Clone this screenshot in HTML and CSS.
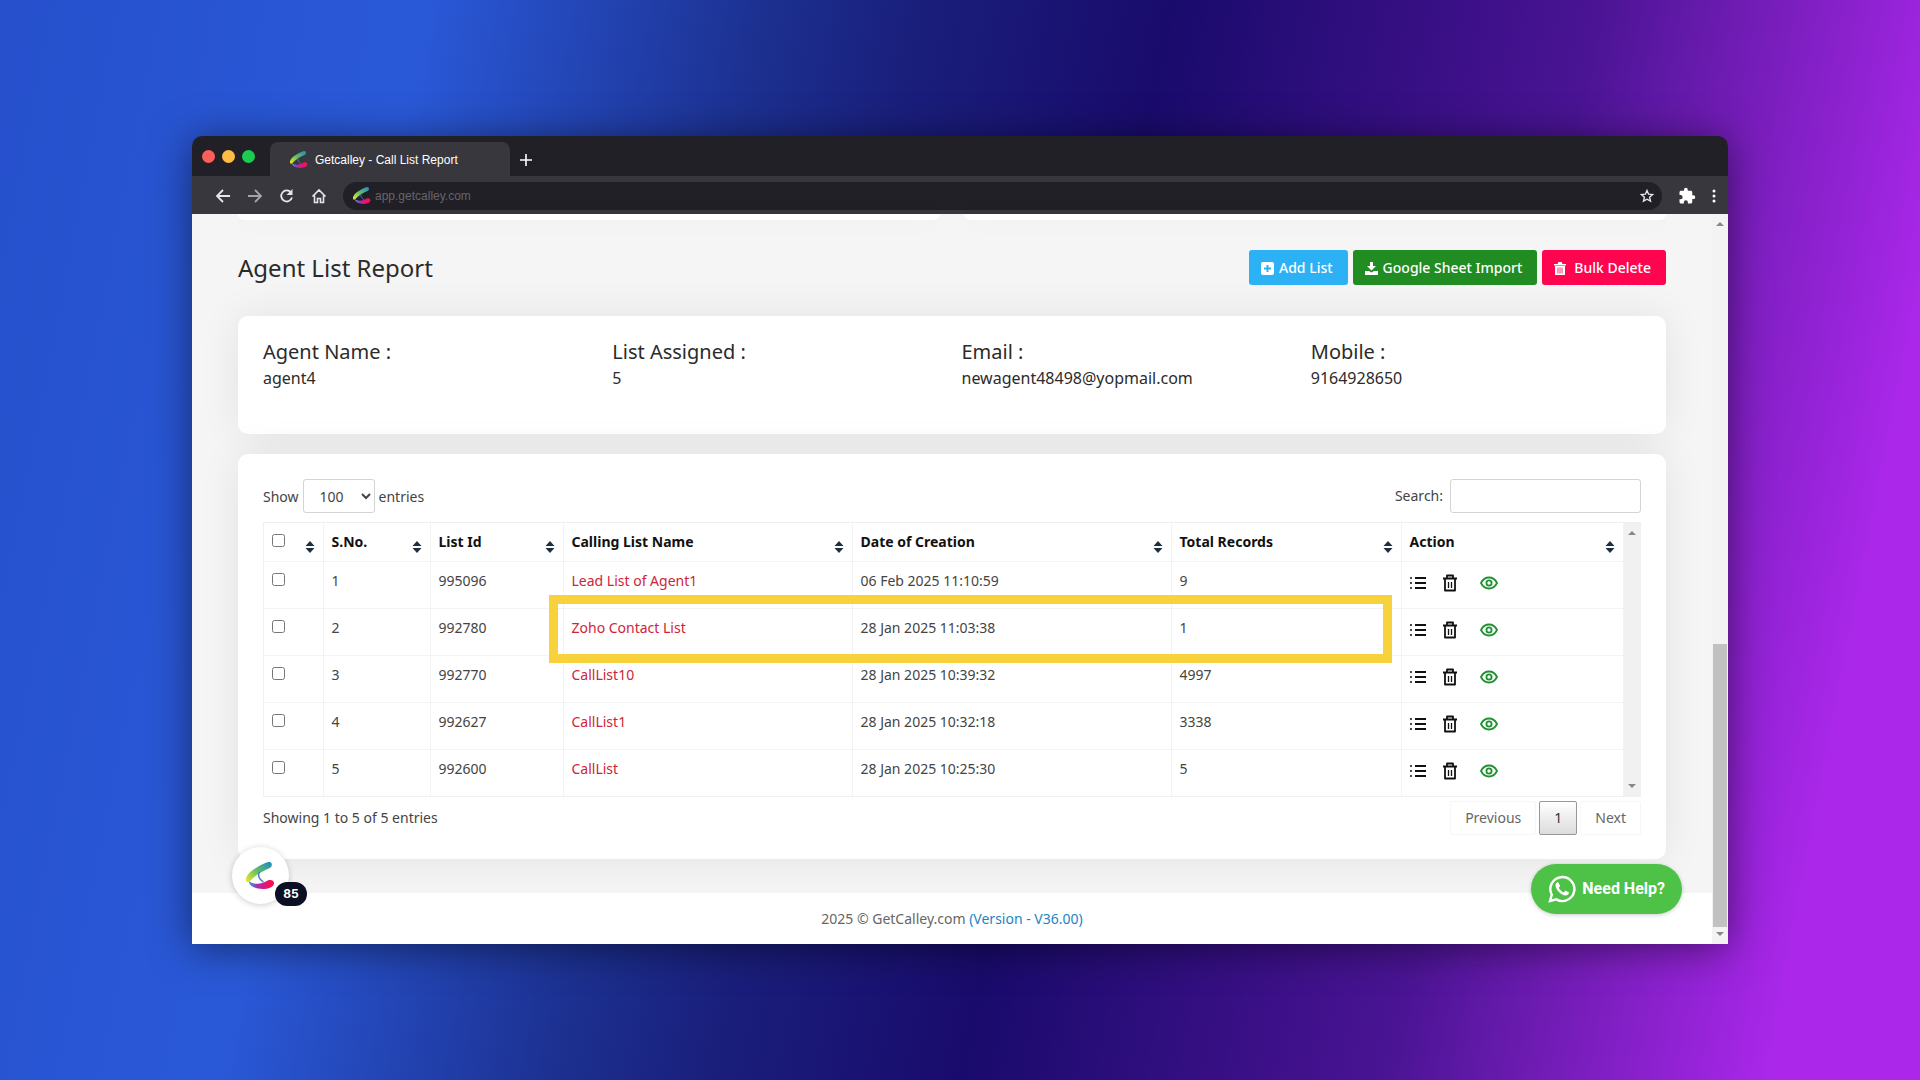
FILE: index.html
```html
<!DOCTYPE html>
<html lang="en">
<head>
    <meta charset="UTF-8">
    <meta name="viewport" content="width=device-width, initial-scale=1.0">
    <title>Getcalley - Call List Report</title>
    <link rel="stylesheet" href="styles.css">
</head>
<body>
    <!-- shared icons -->
    <svg class="sprite" aria-hidden="true">
        <defs>
            <linearGradient id="swooshTop" x1="0" y1="1" x2="1" y2="0">
                <stop offset="0" stop-color="#f6ea1e"/>
                <stop offset="0.5" stop-color="#62bd68"/>
                <stop offset="1" stop-color="#1c86c8"/>
            </linearGradient>
            <linearGradient id="swooshBottom" x1="0" y1="0" x2="1" y2="0">
                <stop offset="0" stop-color="#2aa5e0"/>
                <stop offset="0.35" stop-color="#b02ab0"/>
                <stop offset="0.8" stop-color="#f5105a"/>
            </linearGradient>
            <symbol id="logo" viewBox="0 0 30 28">
                <path d="M23 0C14 3 2 10 0 17c-1 4 2 5 4 3C9 14 16 10 25 6c3-2 2-7-2-6z" fill="url(#swooshTop)"/>
                <path d="M14 10c-2 3-1 7 4 11" fill="none" stroke="#3f7fc8" stroke-width="1.500"/>
                <path d="M3 20c0 5 7 8 14 8 6 0 12-2 12-6 0-3-3-4-6-3-5 3-13 6-20 1z" fill="url(#swooshBottom)"/>
            </symbol>
            <symbol id="list" viewBox="0 0 16 14">
                <path d="M5 2h11M5 7h11M5 12h11" stroke="#111" stroke-width="1.800"/>
                <path d="M0 2h2M0 7h2M0 12h2" stroke="#111" stroke-width="1.500"/>
            </symbol>
            <symbol id="trash" viewBox="0 0 16 18">
                <path d="M1 4.500h14M5 4V1.500h6V4M3 5v11.500h10V5" fill="none" stroke="#111" stroke-width="1.800" stroke-linejoin="round"/>
                <path d="M6.500 8v6M9.500 8v6" stroke="#111" stroke-width="1.300"/>
            </symbol>
            <symbol id="eye" viewBox="0 0 18 14">
                <path d="M1 7c2-4 5-5.500 8-5.500S15 3 17 7c-2 4-5 5.500-8 5.500S3 11 1 7z" fill="none" stroke="#1f9130" stroke-width="1.800"/>
                <circle cx="9" cy="7" r="2.600" fill="none" stroke="#1f9130" stroke-width="1.800"/>
            </symbol>
            <symbol id="sort" viewBox="0 0 10 14">
                <path d="M5 1l4.500 5h-9zM5 13L.5 8h9z" fill="#1f2f42"/>
            </symbol>
        </defs>
    </svg>

    <div class="browser">
        <div class="tab-bar">
            <div class="lights">
                <span class="light red"></span>
                <span class="light yellow"></span>
                <span class="light green"></span>
            </div>
            <div class="tab">
                <svg class="favicon"><use href="#logo"/></svg>
                <span>Getcalley - Call List Report</span>
            </div>
            <button class="new-tab" aria-label="New tab">
                <svg width="12" height="12" viewBox="0 0 12 12"><path d="M6 0v12M0 6h12" stroke="#fff" stroke-width="1.600"/></svg>
            </button>
        </div>

        <div class="toolbar">
            <button aria-label="Back">
                <svg width="16" height="16" viewBox="0 0 16 16"><path d="M15 8H2M8 2L2 8l6 6" fill="none" stroke="#e6e6e8" stroke-width="1.800"/></svg>
            </button>
            <button aria-label="Forward">
                <svg width="16" height="16" viewBox="0 0 16 16"><path d="M1 8h13M8 2l6 6-6 6" fill="none" stroke="#a5a5a9" stroke-width="1.800"/></svg>
            </button>
            <button aria-label="Reload">
                <svg width="16" height="16" viewBox="0 0 16 16"><path d="M12 4.500A5.500 5.500 0 1 0 13 9.500" fill="none" stroke="#e6e6e8" stroke-width="1.800"/><path d="M13.500 1v6h-6z" fill="#e6e6e8"/></svg>
            </button>
            <button aria-label="Home">
                <svg width="16" height="16" viewBox="0 0 16 16"><path d="M1.500 8.500L8 2l6.500 6.500M3.500 7.500v7h3v-4h3v4h3v-7" fill="none" stroke="#e6e6e8" stroke-width="1.600"/></svg>
            </button>
            <div class="address">
                <svg class="favicon"><use href="#logo"/></svg>
                <input type="text" value="app.getcalley.com" aria-label="Address">
                <svg width="14" height="14" viewBox="0 0 14 14"><path d="M7 1.500l1.600 3.700 4 .4-3 2.700.9 3.900L7 10.200l-3.500 2 .9-3.900-3-2.700 4-.4z" fill="none" stroke="#e6e6e8" stroke-width="1.400"/></svg>
            </div>
            <button aria-label="Extensions">
                <svg width="18" height="18" viewBox="0 0 24 24"><path d="M20.500 11H19V7c0-1.100-.9-2-2-2h-4V3.500a2.500 2.500 0 0 0-5 0V5H4c-1.100 0-2 .9-2 2v3.800h1.500a2.700 2.700 0 0 1 0 5.400H2V20c0 1.100.9 2 2 2h3.800v-1.500a2.700 2.700 0 0 1 5.400 0V22H17c1.100 0 2-.9 2-2v-4h1.500a2.500 2.500 0 0 0 0-5z" fill="#fff"/></svg>
            </button>
            <button aria-label="Menu">
                <svg width="4" height="14" viewBox="0 0 4 14"><circle cx="2" cy="2" r="1.500" fill="#fff"/><circle cx="2" cy="7" r="1.500" fill="#fff"/><circle cx="2" cy="12" r="1.500" fill="#fff"/></svg>
            </button>
        </div>

        <div class="viewport">
            <main class="page">
                <div class="previous-cards">
                    <div></div>
                    <div></div>
                </div>

                <div class="page-header">
                    <h1>Agent List Report</h1>
                    <div class="buttons">
                        <button class="btn btn-info">
                            <svg width="13" height="13" viewBox="0 0 13 13"><rect width="13" height="13" rx="2" fill="#fff"/><path d="M6.500 3v7M3 6.500h7" stroke="#2cb1f5" stroke-width="2"/></svg>
                            Add List
                        </button>
                        <button class="btn btn-success">
                            <svg width="13" height="13" viewBox="0 0 13 13"><path d="M5 0h3v4h3L6.500 8.500 2 4h3zM0 9h4l2.500 1.500L9 9h4v4H0z" fill="#fff"/></svg>
                            Google Sheet Import
                        </button>
                        <button class="btn btn-danger">
                            <svg width="12" height="13" viewBox="0 0 12 13"><path d="M0 2h3.500L4.500 0h3l1 2H12v1.500H0zM1 4h10v9H1z" fill="#fff"/><path d="M4 5.500v6M6 5.500v6M8 5.500v6" stroke="#ff0550" stroke-width="0.800"/></svg>
                            Bulk Delete
                        </button>
                    </div>
                </div>

                <section class="card agent">
                    <div><h2>Agent Name :</h2><p>agent4</p></div>
                    <div><h2>List Assigned :</h2><p>5</p></div>
                    <div><h2>Email :</h2><p>newagent48498@yopmail.com</p></div>
                    <div><h2>Mobile :</h2><p>9164928650</p></div>
                </section>

                <section class="card report">
                    <div class="controls">
                        <label>Show
                            <select>
                                <option>100</option>
                            </select>
                            entries
                        </label>
                        <label class="search">Search: <input type="search"></label>
                    </div>

                    <div class="table-wrap">
                        <table>
                            <colgroup>
                                <col class="col-check">
                                <col class="col-no">
                                <col class="col-id">
                                <col class="col-name">
                                <col class="col-date">
                                <col class="col-total">
                                <col>
                            </colgroup>
                            <thead>
                                <tr>
                                    <th><div><input type="checkbox" aria-label="Select all"><svg class="sort"><use href="#sort"/></svg></div></th>
                                    <th><div>S.No.<svg class="sort"><use href="#sort"/></svg></div></th>
                                    <th><div>List Id<svg class="sort"><use href="#sort"/></svg></div></th>
                                    <th><div>Calling List Name<svg class="sort"><use href="#sort"/></svg></div></th>
                                    <th><div>Date of Creation<svg class="sort"><use href="#sort"/></svg></div></th>
                                    <th><div>Total Records<svg class="sort"><use href="#sort"/></svg></div></th>
                                    <th><div>Action<svg class="sort"><use href="#sort"/></svg></div></th>
                                </tr>
                            </thead>
                            <tbody>
                                <tr>
                                    <td><input type="checkbox" aria-label="Select 995096"></td>
                                    <td>1</td>
                                    <td>995096</td>
                                    <td><a href="#">Lead List of Agent1</a></td>
                                    <td>06 Feb 2025 11:10:59</td>
                                    <td>9</td>
                                    <td><div class="actions"><button aria-label="Details"><svg class="i-list"><use href="#list"/></svg></button><button aria-label="Delete"><svg class="i-trash"><use href="#trash"/></svg></button><button aria-label="View"><svg class="i-eye"><use href="#eye"/></svg></button></div></td>
                                </tr>
                                <tr>
                                    <td><input type="checkbox" aria-label="Select 992780"></td>
                                    <td>2</td>
                                    <td>992780</td>
                                    <td><a href="#">Zoho Contact List</a></td>
                                    <td>28 Jan 2025 11:03:38</td>
                                    <td>1</td>
                                    <td><div class="actions"><button aria-label="Details"><svg class="i-list"><use href="#list"/></svg></button><button aria-label="Delete"><svg class="i-trash"><use href="#trash"/></svg></button><button aria-label="View"><svg class="i-eye"><use href="#eye"/></svg></button></div></td>
                                </tr>
                                <tr>
                                    <td><input type="checkbox" aria-label="Select 992770"></td>
                                    <td>3</td>
                                    <td>992770</td>
                                    <td><a href="#">CallList10</a></td>
                                    <td>28 Jan 2025 10:39:32</td>
                                    <td>4997</td>
                                    <td><div class="actions"><button aria-label="Details"><svg class="i-list"><use href="#list"/></svg></button><button aria-label="Delete"><svg class="i-trash"><use href="#trash"/></svg></button><button aria-label="View"><svg class="i-eye"><use href="#eye"/></svg></button></div></td>
                                </tr>
                                <tr>
                                    <td><input type="checkbox" aria-label="Select 992627"></td>
                                    <td>4</td>
                                    <td>992627</td>
                                    <td><a href="#">CallList1</a></td>
                                    <td>28 Jan 2025 10:32:18</td>
                                    <td>3338</td>
                                    <td><div class="actions"><button aria-label="Details"><svg class="i-list"><use href="#list"/></svg></button><button aria-label="Delete"><svg class="i-trash"><use href="#trash"/></svg></button><button aria-label="View"><svg class="i-eye"><use href="#eye"/></svg></button></div></td>
                                </tr>
                                <tr>
                                    <td><input type="checkbox" aria-label="Select 992600"></td>
                                    <td>5</td>
                                    <td>992600</td>
                                    <td><a href="#">CallList</a></td>
                                    <td>28 Jan 2025 10:25:30</td>
                                    <td>5</td>
                                    <td><div class="actions"><button aria-label="Details"><svg class="i-list"><use href="#list"/></svg></button><button aria-label="Delete"><svg class="i-trash"><use href="#trash"/></svg></button><button aria-label="View"><svg class="i-eye"><use href="#eye"/></svg></button></div></td>
                                </tr>
                            </tbody>
                        </table>
                        <div class="table-scroll">
                            <span class="arrow up"></span>
                            <span class="arrow down"></span>
                        </div>
                        <div class="highlight"></div>
                    </div>

                    <div class="table-footer">
                        <span>Showing 1 to 5 of 5 entries</span>
                        <nav class="pagination">
                            <button>Previous</button>
                            <button class="current">1</button>
                            <button>Next</button>
                        </nav>
                    </div>
                </section>

                <footer>2025 © GetCalley.com <a href="#">(Version - V36.00)</a></footer>
            </main>

            <div class="scrollbar">
                <span class="arrow up"></span>
                <div class="thumb"></div>
                <span class="arrow down"></span>
            </div>

            <button class="bubble" aria-label="Updates">
                <svg width="29" height="27"><use href="#logo"/></svg>
                <span class="badge">85</span>
            </button>

            <button class="whatsapp">
                <svg width="28" height="28" viewBox="0 0 28 28">
                    <path d="M2 26l1.800-6.300A12 12 0 1 1 8.300 24.400z" fill="none" stroke="#fff" stroke-width="2.400"/>
                    <path d="M10 7c-1 0-2.500 1.500-2.500 3.500 0 4 6 10 10 10 2 0 3.500-1.500 3.500-3l-3.500-2-1.700 2c-2-.7-4-2.700-5-4.800l1.400-1.700z" fill="#fff"/>
                </svg>
                Need Help?
            </button>
        </div>
    </div>
</body>
</html>
```

FILE: styles.css
```css
* {
    margin: 0;
    padding: 0;
    box-sizing: border-box;
}

body {
    font-family: 'Noto Sans', 'Open Sans', sans-serif;
    font-size: 14px;
    line-height: 20px;
    color: #444;
    min-height: 100vh;
    display: flex;
    align-items: center;
    justify-content: center;
    background: linear-gradient(101deg, #2650cc 0%, #2a59d8 20%, #1c3090 36%, #1a1f7c 43%, #190b6c 55%, #3c1088 69%, #4a1494 75%, #701cb4 82%, #9a24dc 90%, #ab28ea 93%);
}

button {
    font: inherit;
    color: inherit;
    background: none;
    border: none;
    cursor: pointer;
}

a {
    text-decoration: none;
}

svg {
    display: block;
    flex-shrink: 0;
}

.sprite {
    position: absolute;
    width: 0;
    height: 0;
}

/* browser frame */
.browser {
    width: 80%;
    border-radius: 10px 10px 0 0;
    overflow: hidden;
    box-shadow: 0 4px 40px rgba(0, 0, 0, 0.5);
}

.tab-bar {
    display: flex;
    align-items: flex-end;
    height: 40px;
    background: #212026;
    font-family: 'Liberation Sans', Arial, sans-serif;
    font-size: 12px;
    color: #fff;
}

.lights {
    display: flex;
    align-items: center;
    gap: 7px;
    width: 78px;
    height: 40px;
    padding: 2px 0 0 10px;
}

.light {
    width: 13px;
    height: 13px;
    border-radius: 50%;
}

.red { background: #fb5f5c; }
.yellow { background: #fcbc45; }
.green { background: #1dcb52; }

.tab {
    display: flex;
    align-items: center;
    gap: 7px;
    width: 240px;
    height: 34px;
    padding: 2px 0 0 20px;
    border-radius: 8px 8px 0 0;
    background: #38373d;
}

.favicon {
    width: 18px;
    height: 17px;
}

.new-tab {
    height: 32px;
    padding: 0 10px;
}

.toolbar {
    display: flex;
    align-items: center;
    gap: 16px;
    height: 38px;
    padding: 2px 12px 0 23px;
    background: #38373d;
}

.address {
    flex: 1;
    display: flex;
    align-items: center;
    gap: 4px;
    height: 28px;
    padding: 0 8px 0 10px;
    border-radius: 14px;
    background: #212026;
}

.address input {
    flex: 1;
    border: none;
    background: none;
    outline: none;
    font-family: 'Liberation Sans', Arial, sans-serif;
    font-size: 12px;
    color: #66656b;
}

/* page */
.viewport {
    position: relative;
    display: flex;
    background: #f5f5f5;
}

.page {
    flex: 1;
}

.previous-cards {
    display: flex;
    gap: 24px;
    height: 6px;
    margin: 0 46px;
}

.previous-cards div {
    flex: 1;
    border-radius: 0 0 8px 8px;
    background: #fff;
    box-shadow: 0 0 30px rgba(0, 0, 0, 0.05);
}

.page-header {
    display: flex;
    align-items: center;
    justify-content: space-between;
    margin: 30px 46px 31px;
}

h1 {
    font-size: 24px;
    line-height: 35px;
    font-weight: 400;
    color: #2b2b2b;
}

.buttons {
    display: flex;
    gap: 5px;
}

.btn {
    display: flex;
    align-items: center;
    gap: 5px;
    height: 35px;
    padding: 2px 15px 0 12px;
    border-radius: 3px;
    font-weight: 500;
    color: #fff;
}

.btn-info { background: #2cb1f5; }
.btn-success { background: #218c21; }
.btn-danger { background: #ff0550; gap: 8px; }

.card {
    margin: 0 46px;
    border-radius: 10px;
    background: #fff;
    box-shadow: 0 0 40px rgba(0, 0, 0, 0.08);
}

.agent {
    display: flex;
    padding: 23px 6px 42px 25px;
    margin-bottom: 20px;
    color: #2b2b2b;
}

.agent div {
    flex: 1;
}

.agent h2 {
    font-size: 20px;
    line-height: 26px;
    font-weight: 400;
}

.agent p {
    font-size: 16px;
    line-height: 27px;
}

.report {
    padding: 25px 25px 24px;
    margin-bottom: 34px;
}

.controls {
    display: flex;
    justify-content: space-between;
    margin-bottom: 9px;
}

.controls label {
    display: flex;
    align-items: baseline;
    gap: 4px;
}

.controls .search {
    gap: 7px;
}

.controls select,
.controls input {
    height: 34px;
    border: 1px solid #d4d4d4;
    border-radius: 3px;
    background: #fff;
    font: inherit;
    color: inherit;
}

.controls select {
    width: 72px;
    padding: 2px 0 0 12px;
}

.controls input {
    width: 191px;
}

.table-wrap {
    position: relative;
    display: flex;
    border: 1px solid #f0f0f0;
}

table {
    flex: 1;
    table-layout: fixed;
    border-collapse: collapse;
}

.col-check { width: 59px; }
.col-no { width: 107px; }
.col-id { width: 133px; }
.col-name { width: 289px; }
.col-date { width: 319px; }
.col-total { width: 230px; }

th,
td {
    text-align: left;
    vertical-align: top;
    padding: 9px 8px;
    border-right: 1px solid #f3f3f3;
    border-bottom: 1px solid #f3f3f3;
}

tbody tr:last-child td {
    border-bottom: none;
}

th {
    font-weight: 700;
    color: #111;
}

th div {
    display: flex;
    justify-content: space-between;
    height: 20px;
}

td {
    height: 47px;
}

td a {
    color: #cf2438;
}

input[type="checkbox"] {
    display: block;
    width: 13px;
    height: 13px;
    margin: 2px 0;
}

.sort {
    width: 10px;
    height: 14px;
    margin-top: 8px;
}

.actions {
    display: flex;
    align-items: center;
    height: 24px;
    gap: 16px;
}

.actions button:last-child {
    margin-left: 6px;
}

.i-list { width: 16px; height: 14px; }
.i-trash { width: 16px; height: 18px; }
.i-eye { width: 18px; height: 14px; }

.table-scroll {
    display: flex;
    flex-direction: column;
    justify-content: space-between;
    align-items: center;
    width: 16px;
    padding: 8px 0;
    background: #f1f1f1;
}

.arrow {
    border: 4px solid transparent;
}

.arrow.up {
    border-top: none;
    border-bottom-color: #888;
}

.arrow.down {
    border-bottom: none;
    border-top-color: #888;
}

.highlight {
    position: absolute;
    left: 285px;
    right: 248px;
    top: 72px;
    height: 68px;
    border: 9px solid #f8d23c;
}

.table-footer {
    display: flex;
    align-items: center;
    justify-content: space-between;
    margin-top: 4px;
}

.pagination {
    display: flex;
    gap: 3px;
    color: #666;
}

.pagination button {
    height: 34px;
    padding: 0 14px;
    border: 1px solid #f6f6f6;
    border-radius: 2px;
}

.pagination .current {
    border-color: #979797;
    background: linear-gradient(#fff, #dcdcdc);
    color: #333;
}

footer {
    padding: 16px 0 15px;
    text-align: center;
    color: #666;
    background: #fff;
}

footer a {
    color: #1c84c6;
}

.scrollbar {
    display: flex;
    flex-direction: column;
    align-items: center;
    width: 16px;
    padding: 8px 0;
    background: #f3f3f3;
}

.thumb {
    width: 14px;
    height: 283px;
    margin: auto 0 5px;
    background: #c1c1c1;
}

.bubble {
    position: absolute;
    left: 40px;
    bottom: 40px;
    display: flex;
    align-items: center;
    justify-content: center;
    width: 57px;
    height: 57px;
    border-radius: 50%;
    background: #fff;
    box-shadow: 0 1px 6px rgba(0, 0, 0, 0.2);
}

.badge {
    position: absolute;
    left: 43px;
    top: 35px;
    width: 32px;
    height: 24px;
    border-radius: 12px;
    font-family: Inter, sans-serif;
    font-size: 12px;
    line-height: 24px;
    font-weight: 700;
    color: #fff;
    background: #0b1023;
}

.whatsapp {
    position: absolute;
    right: 46px;
    bottom: 30px;
    display: flex;
    align-items: center;
    gap: 6px;
    height: 50px;
    padding: 0 17px;
    border-radius: 25px;
    font-family: Roboto, sans-serif;
    font-size: 16px;
    font-weight: 700;
    color: #fff;
    background: #4dc247;
    box-shadow: 0 1px 4px rgba(0, 0, 0, 0.2);
}
```
